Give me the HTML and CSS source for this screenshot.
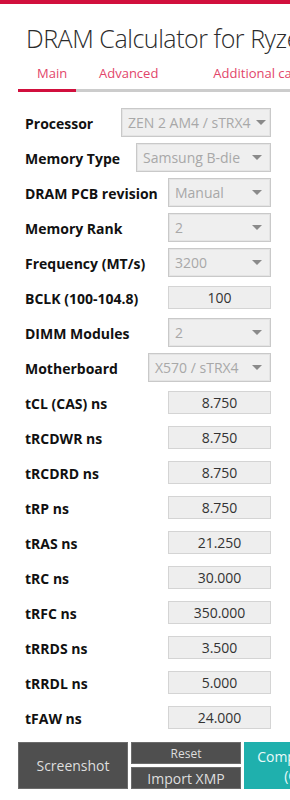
FILE: index.html
```html
<!DOCTYPE html>
<html lang="en">

<head>
    <meta charset="UTF-8" />
    <meta name="viewport" content="width=device-width, initial-scale=1.0" />
    <title>DRAM Calculator for Ryzen</title>
    <link rel="stylesheet" href="styles.css">
</head>

<body>
    <div class="accent"></div>

    <h1 class="title">DRAM Calculator for Ryzen&trade; 1.7.3</h1>

    <!-- Tabs -->
    <nav class="tabs">
        <span class="tab tab-main active">Main</span>
        <span class="tab tab-adv">Advanced</span>
        <span class="tab tab-add">Additional calculations</span>
    </nav>

    <div class="form">
        <div class="row">
            <span class="label">Processor</span>
            <div class="select w-150"><span>ZEN 2 AM4 / sTRX4</span><i class="caret tight"></i></div>
        </div>
        <div class="row">
            <span class="label">Memory Type</span>
            <div class="select w-135"><span>Samsung B-die</span><i class="caret"></i></div>
        </div>
        <div class="row">
            <span class="label">DRAM PCB revision</span>
            <div class="select w-103"><span>Manual</span><i class="caret"></i></div>
        </div>
        <div class="row">
            <span class="label">Memory Rank</span>
            <div class="select w-103"><span>2</span><i class="caret"></i></div>
        </div>
        <div class="row">
            <span class="label">Frequency (MT/s)</span>
            <div class="select w-103"><span>3200</span><i class="caret"></i></div>
        </div>
        <div class="row">
            <span class="label">BCLK (100-104.8)</span>
            <div class="field w-103">100</div>
        </div>
        <div class="row">
            <span class="label">DIMM Modules</span>
            <div class="select w-103"><span>2</span><i class="caret"></i></div>
        </div>
        <div class="row">
            <span class="label">Motherboard</span>
            <div class="select w-123"><span>X570 / sTRX4</span><i class="caret"></i></div>
        </div>
        <div class="row">
            <span class="label">tCL (CAS) ns</span>
            <div class="field w-103">8.750</div>
        </div>
        <div class="row">
            <span class="label">tRCDWR ns</span>
            <div class="field w-103">8.750</div>
        </div>
        <div class="row">
            <span class="label">tRCDRD ns</span>
            <div class="field w-103">8.750</div>
        </div>
        <div class="row">
            <span class="label">tRP ns</span>
            <div class="field w-103">8.750</div>
        </div>
        <div class="row">
            <span class="label">tRAS ns</span>
            <div class="field w-103">21.250</div>
        </div>
        <div class="row">
            <span class="label">tRC ns</span>
            <div class="field w-103">30.000</div>
        </div>
        <div class="row">
            <span class="label">tRFC ns</span>
            <div class="field w-103">350.000</div>
        </div>
        <div class="row">
            <span class="label">tRRDS ns</span>
            <div class="field w-103">3.500</div>
        </div>
        <div class="row">
            <span class="label">tRRDL ns</span>
            <div class="field w-103">5.000</div>
        </div>
        <div class="row">
            <span class="label">tFAW ns</span>
            <div class="field w-103">24.000</div>
        </div>
    </div>

    <!-- Bottom buttons -->
    <div class="actions">
        <button class="btn btn-big">Screenshot</button>
        <div class="btn-stack">
            <button class="btn btn-small">Reset</button>
            <button class="btn btn-half">Import XMP</button>
        </div>
        <button class="btn btn-teal">Compare timings<br>(CTRL+C)</button>
    </div>
</body>

</html>
```

FILE: styles.css
```css
* {
    margin: 0;
    padding: 0;
    box-sizing: border-box;
}

body {
    font-family: "Open Sans", "Noto Sans", sans-serif;
    width: 290px;
    height: 800px;
    overflow: hidden;
    background-color: #fff;
    color: #111;
}

.accent {
    height: 4px;
    background-color: #d10f3d;
}

.title {
    margin: 17px 0 0 26px;
    font-size: 25px;
    font-weight: 300;
    letter-spacing: -0.45px;
    line-height: 34px;
    color: #2b2b2b;
    white-space: nowrap;
}

/* Tabs */
.tabs {
    display: flex;
    margin: 9px 0 0 18px;
    width: 600px;
    border-bottom: 3px solid #cccccc;
    white-space: nowrap;
}

.tab {
    font-size: 13px;
    color: #e2456a;
    line-height: 18px;
    padding-bottom: 7px;
    margin-bottom: -3px;
    border-bottom: 3px solid transparent;
}

.tab-main {
    width: 58px;
    padding-left: 19px;
}

.tab-adv {
    margin-left: 23px;
}

.tab-add {
    margin-left: 55px;
}

.tab.active {
    border-bottom-color: #d10f3d;
}

/* Form rows */
.form {
    margin-top: 13px;
    padding-left: 25px;
    width: 271px;
}

.row {
    display: flex;
    justify-content: space-between;
    align-items: center;
    height: 35px;
}

.label {
    font-size: 14px;
    font-weight: 700;
    white-space: nowrap;
    padding-top: 2px;
}

.select {
    display: flex;
    align-items: center;
    justify-content: space-between;
    height: 29px;
    padding: 0 8px 0 6px;
    background-color: #efefef;
    border: 1px solid #c9c9c9;
    box-shadow: inset 0 0 0 1px #e4e4e4;
    color: #a8a8a8;
    font-size: 14px;
    white-space: nowrap;
}

.caret {
    flex-shrink: 0;
    width: 0;
    height: 0;
    border-left: 5px solid transparent;
    border-right: 5px solid transparent;
    border-top: 5px solid #8a8a8a;
}

.caret.tight {
    margin-right: -4px;
}

.field {
    height: 23px;
    line-height: 21px;
    text-align: center;
    background-color: #eeeeee;
    border: 1px solid #d4d4d4;
    color: #333;
    font-size: 14px;
}

.w-150 { width: 150px; }
.w-135 { width: 135px; }
.w-123 { width: 123px; }
.w-103 { width: 103px; }

/* Bottom buttons */
.actions {
    display: flex;
    gap: 3px;
    margin: 7px 0 0 18px;
    width: 420px;
}

.btn {
    border: 1px solid #6c6c6c;
    background-color: #4f4f4f;
    color: #dedede;
    font-family: "Open Sans", "Noto Sans", sans-serif;
    font-size: 14px;
    cursor: pointer;
}

.btn-big {
    width: 110px;
    height: 47px;
}

.btn-stack {
    display: flex;
    flex-direction: column;
    gap: 3px;
    width: 110px;
}

.btn-small {
    height: 22px;
    font-size: 12px;
}

.btn-half {
    height: 22px;
}

.btn-teal {
    width: 138px;
    height: 47px;
    background-color: #1fb0ad;
    border-color: #1fb0ad;
    color: #eafafa;
    line-height: 19px;
}
```
